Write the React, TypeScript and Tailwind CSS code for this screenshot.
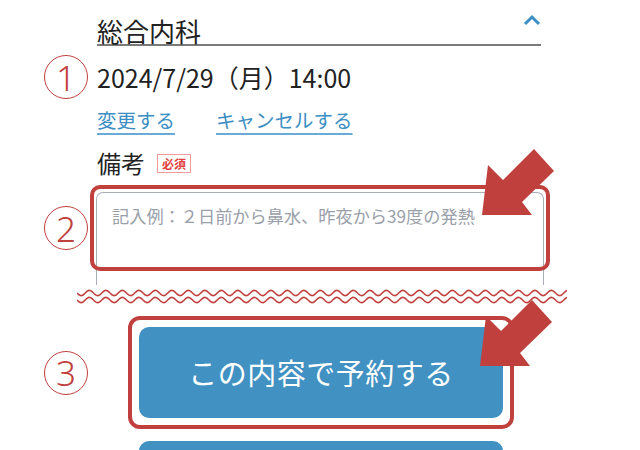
const RED = "#c0403e";

function Circled({ n }: { n: string }) {
  return (
    <div className="w-[44px] h-[44px] shrink-0 rounded-full border-[1.5px] border-[#c0403e] flex items-center justify-center text-[#c0403e] text-[35px] leading-none font-light font-['Noto_Sans','Noto_Sans_CJK_JP',sans-serif]">
      {n}
    </div>
  );
}

function Arrow({ className }: { className: string }) {
  // arrow pointing down-left, drawn in a 80x70 box
  return (
    <svg className={className} width="80" height="72" viewBox="0 0 80 72">
      <polygon
        points="2,66 8,16 23,31 54,0 74,22 42,53 52,66"
        fill={RED}
      />
    </svg>
  );
}

function Waves() {
  let d1 = "";
  let d2 = "";
  const period = 16.5;
  for (let x = 0; x <= 490; x += 1) {
    const y = Math.sin((x / period) * Math.PI * 2) * 2.6;
    d1 += `${x === 0 ? "M" : "L"}${x},${(5 + y).toFixed(2)} `;
    d2 += `${x === 0 ? "M" : "L"}${x},${(12 + y).toFixed(2)} `;
  }
  return (
    <svg width="490" height="17" viewBox="0 0 490 17" className="ml-[77px]">
      <path d={d1} fill="none" stroke={RED} strokeWidth="1.6" />
      <path d={d2} fill="none" stroke={RED} strokeWidth="1.6" />
    </svg>
  );
}

export default function App() {
  return (
    <div className="relative w-[640px] h-[450px] overflow-hidden bg-white text-[#222] font-['Noto_Sans_CJK_JP',sans-serif]">
      {/* 見出し */}
      <div className="ml-[97px] w-[444px] pt-[14px] flex items-end justify-between border-b-2 border-[#7a7a7a]">
        <div className="text-[26px] leading-[26px]">総合内科</div>
        <svg width="18" height="12" viewBox="0 0 18 12" className="mb-[18px]">
          <polyline points="2,10 9,3 16,10" fill="none" stroke="#3d8fc3" strokeWidth="3" />
        </svg>
      </div>

      {/* ① 日時 */}
      <div className="flex items-center h-[62px]">
        <div className="ml-[44px]">
          <Circled n="1" />
        </div>
        <div className="ml-[9px] text-[25px] leading-none">2024/7/29（月）14:00</div>
      </div>

      <div className="ml-[97px] flex gap-[41px] text-[19.5px] leading-[24px] text-[#3d8fc3]">
        <span className="underline decoration-[1.5px] decoration-[#6aaad6] underline-offset-[5px]">変更する</span>
        <span className="underline decoration-[1.5px] decoration-[#6aaad6] underline-offset-[5px]">キャンセルする</span>
      </div>

      {/* 備考 */}
      <div className="ml-[97px] mt-[17px] flex items-center gap-[12px] h-[28px]">
        <span className="text-[24px] leading-none">備考</span>
        <span className="border border-[#f29a9a] text-[#e0413e] text-[12px] leading-[15px] px-[4px] py-[1px] font-bold">必須</span>
      </div>

      {/* ② テキストエリア */}
      <div className="flex mt-[15px]">
        <div className="ml-[44px] mt-[14px]">
          <Circled n="2" />
        </div>
        <div className="relative ml-[8px] w-[448px] h-[93px] border-[1.5px] border-b-0 border-[#a9aeb8] rounded-t-[7px] px-[15px] pt-[12px]">
          <div className="text-[17.2px] leading-[22px] text-[#9aa0aa]">記入例：２日前から鼻水、昨夜から39度の発熱</div>
          <div className="absolute left-[-7px] top-[-8px] w-[460px] h-[86px] rounded-[10px] border-4 border-[#c0403e]" />
        </div>
      </div>

      <div className="mt-[3px]">
        <Waves />
      </div>

      {/* ③ ボタン */}
      <div className="flex items-center mt-[11px]">
        <div className="ml-[44px]">
          <Circled n="3" />
        </div>
        <div className="ml-[40px] rounded-[12px] border-4 border-[#c0403e] p-[7px]">
          <div className="w-[364px] h-[91px] rounded-[10px] bg-[#4191c2] flex items-center justify-center text-white text-[29px] tracking-[0.5px]">
            この内容で予約する
          </div>
        </div>
      </div>

      <div className="flex items-end mt-[12px]">
        <div className="ml-[139px] w-[364px] h-[40px] rounded-[10px] bg-[#4191c2]" />
        <div className="ml-[62px] w-[7px] h-[3px] bg-[#4191c2]" />
      </div>

      <Arrow className="absolute left-[480px] top-[149px]" />
      <Arrow className="absolute left-[478px] top-[300px]" />
    </div>
  );
}
